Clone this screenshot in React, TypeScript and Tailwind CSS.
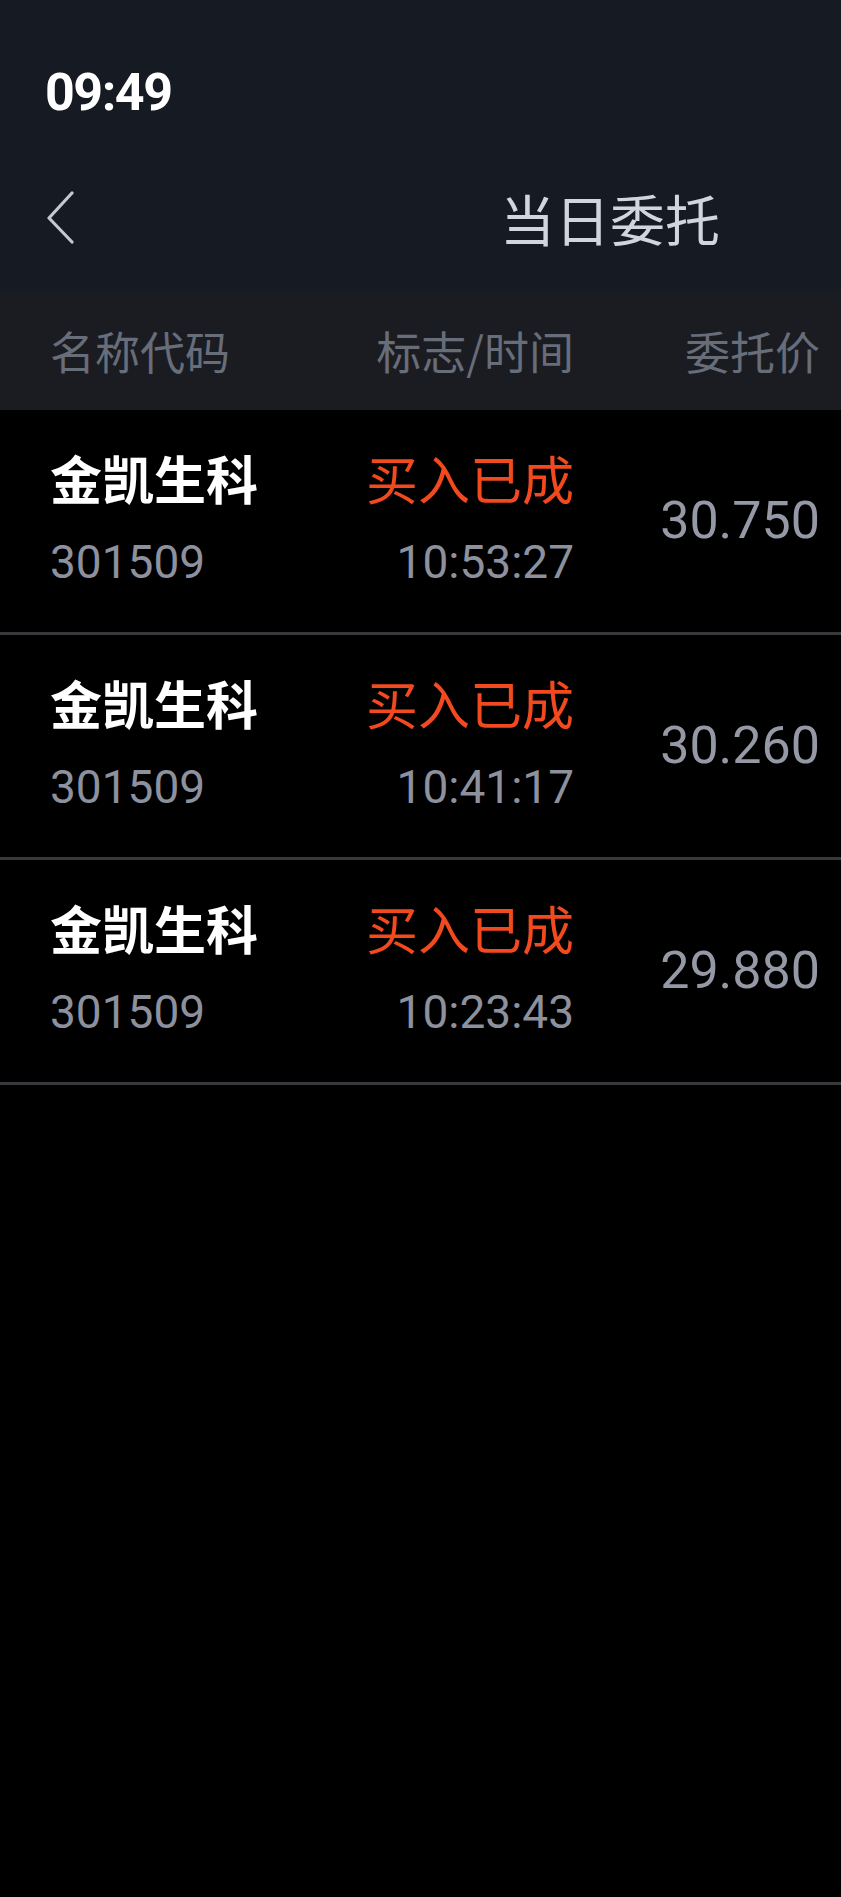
import React from 'react';

const orders = [
  { name: '金凯生科', code: '301509', status: '买入已成', time: '10:53:27', price: '30.750' },
  { name: '金凯生科', code: '301509', status: '买入已成', time: '10:41:17', price: '30.260' },
  { name: '金凯生科', code: '301509', status: '买入已成', time: '10:23:43', price: '29.880' },
];

const cjk = "font-['Noto_Sans_CJK_SC',sans-serif]";
const num = "font-['Roboto','Noto_Sans_CJK_SC',sans-serif]";

function OrderRow({ order }: { order: (typeof orders)[number] }) {
  return (
    <div className="flex h-[225px] border-b-[3px] border-[#38393d]">
      <div className="w-[260px] pl-[50px] pt-[37px] flex flex-col">
        <span className={`${cjk} text-[52px] leading-[62px] font-bold text-white`}>{order.name}</span>
        <span className={`${num} mt-[28px] text-[46px] leading-[50px] text-[#8d919e]`}>{order.code}</span>
      </div>
      <div className="w-[314px] pt-[37px] flex flex-col items-end">
        <span className={`${cjk} text-[52px] leading-[62px] text-[#f2491f]`}>{order.status}</span>
        <span className={`${num} mt-[28px] text-[46px] leading-[50px] text-[#8d919e]`}>{order.time}</span>
      </div>
      <div className="flex-1 pr-[21px] flex items-center justify-end">
        <span className={`${num} text-[52px] leading-[60px] text-[#9599a6]`}>{order.price}</span>
      </div>
    </div>
  );
}

export default function App() {
  return (
    <div className="w-[841px] min-h-[1897px] bg-black">
      <div className="h-[291px] bg-[#161a23] pt-[66px]">
        <div className={`${num} pl-[45px] text-[52px] leading-[54px] font-bold text-white tracking-[-1.5px]`}>
          09:49
        </div>
        <div className="mt-[70px] h-[54px] flex items-center">
          <svg className="ml-[44px] w-[32px] h-[54px]" viewBox="0 0 32 54" fill="none">
            <path d="M28 3 L5 28 L28 52" stroke="#c5c8d1" strokeWidth="3.2" strokeLinecap="round" strokeLinejoin="round" />
          </svg>
          <span className={`${cjk} ml-[424px] text-[55px] leading-[54px] text-[#d2d5de]`}>当日委托</span>
        </div>
      </div>
      <div className={`${cjk} h-[119px] bg-[#1b1c21] flex items-center text-[45px] leading-[50px] text-[#676d79]`}>
        <div className="w-[260px] pl-[50px]">名称代码</div>
        <div className="w-[314px] text-right">标志/时间</div>
        <div className="flex-1 pr-[21px] text-right">委托价</div>
      </div>
      {orders.map((order, idx) => (
        <OrderRow key={idx} order={order} />
      ))}
    </div>
  );
}
